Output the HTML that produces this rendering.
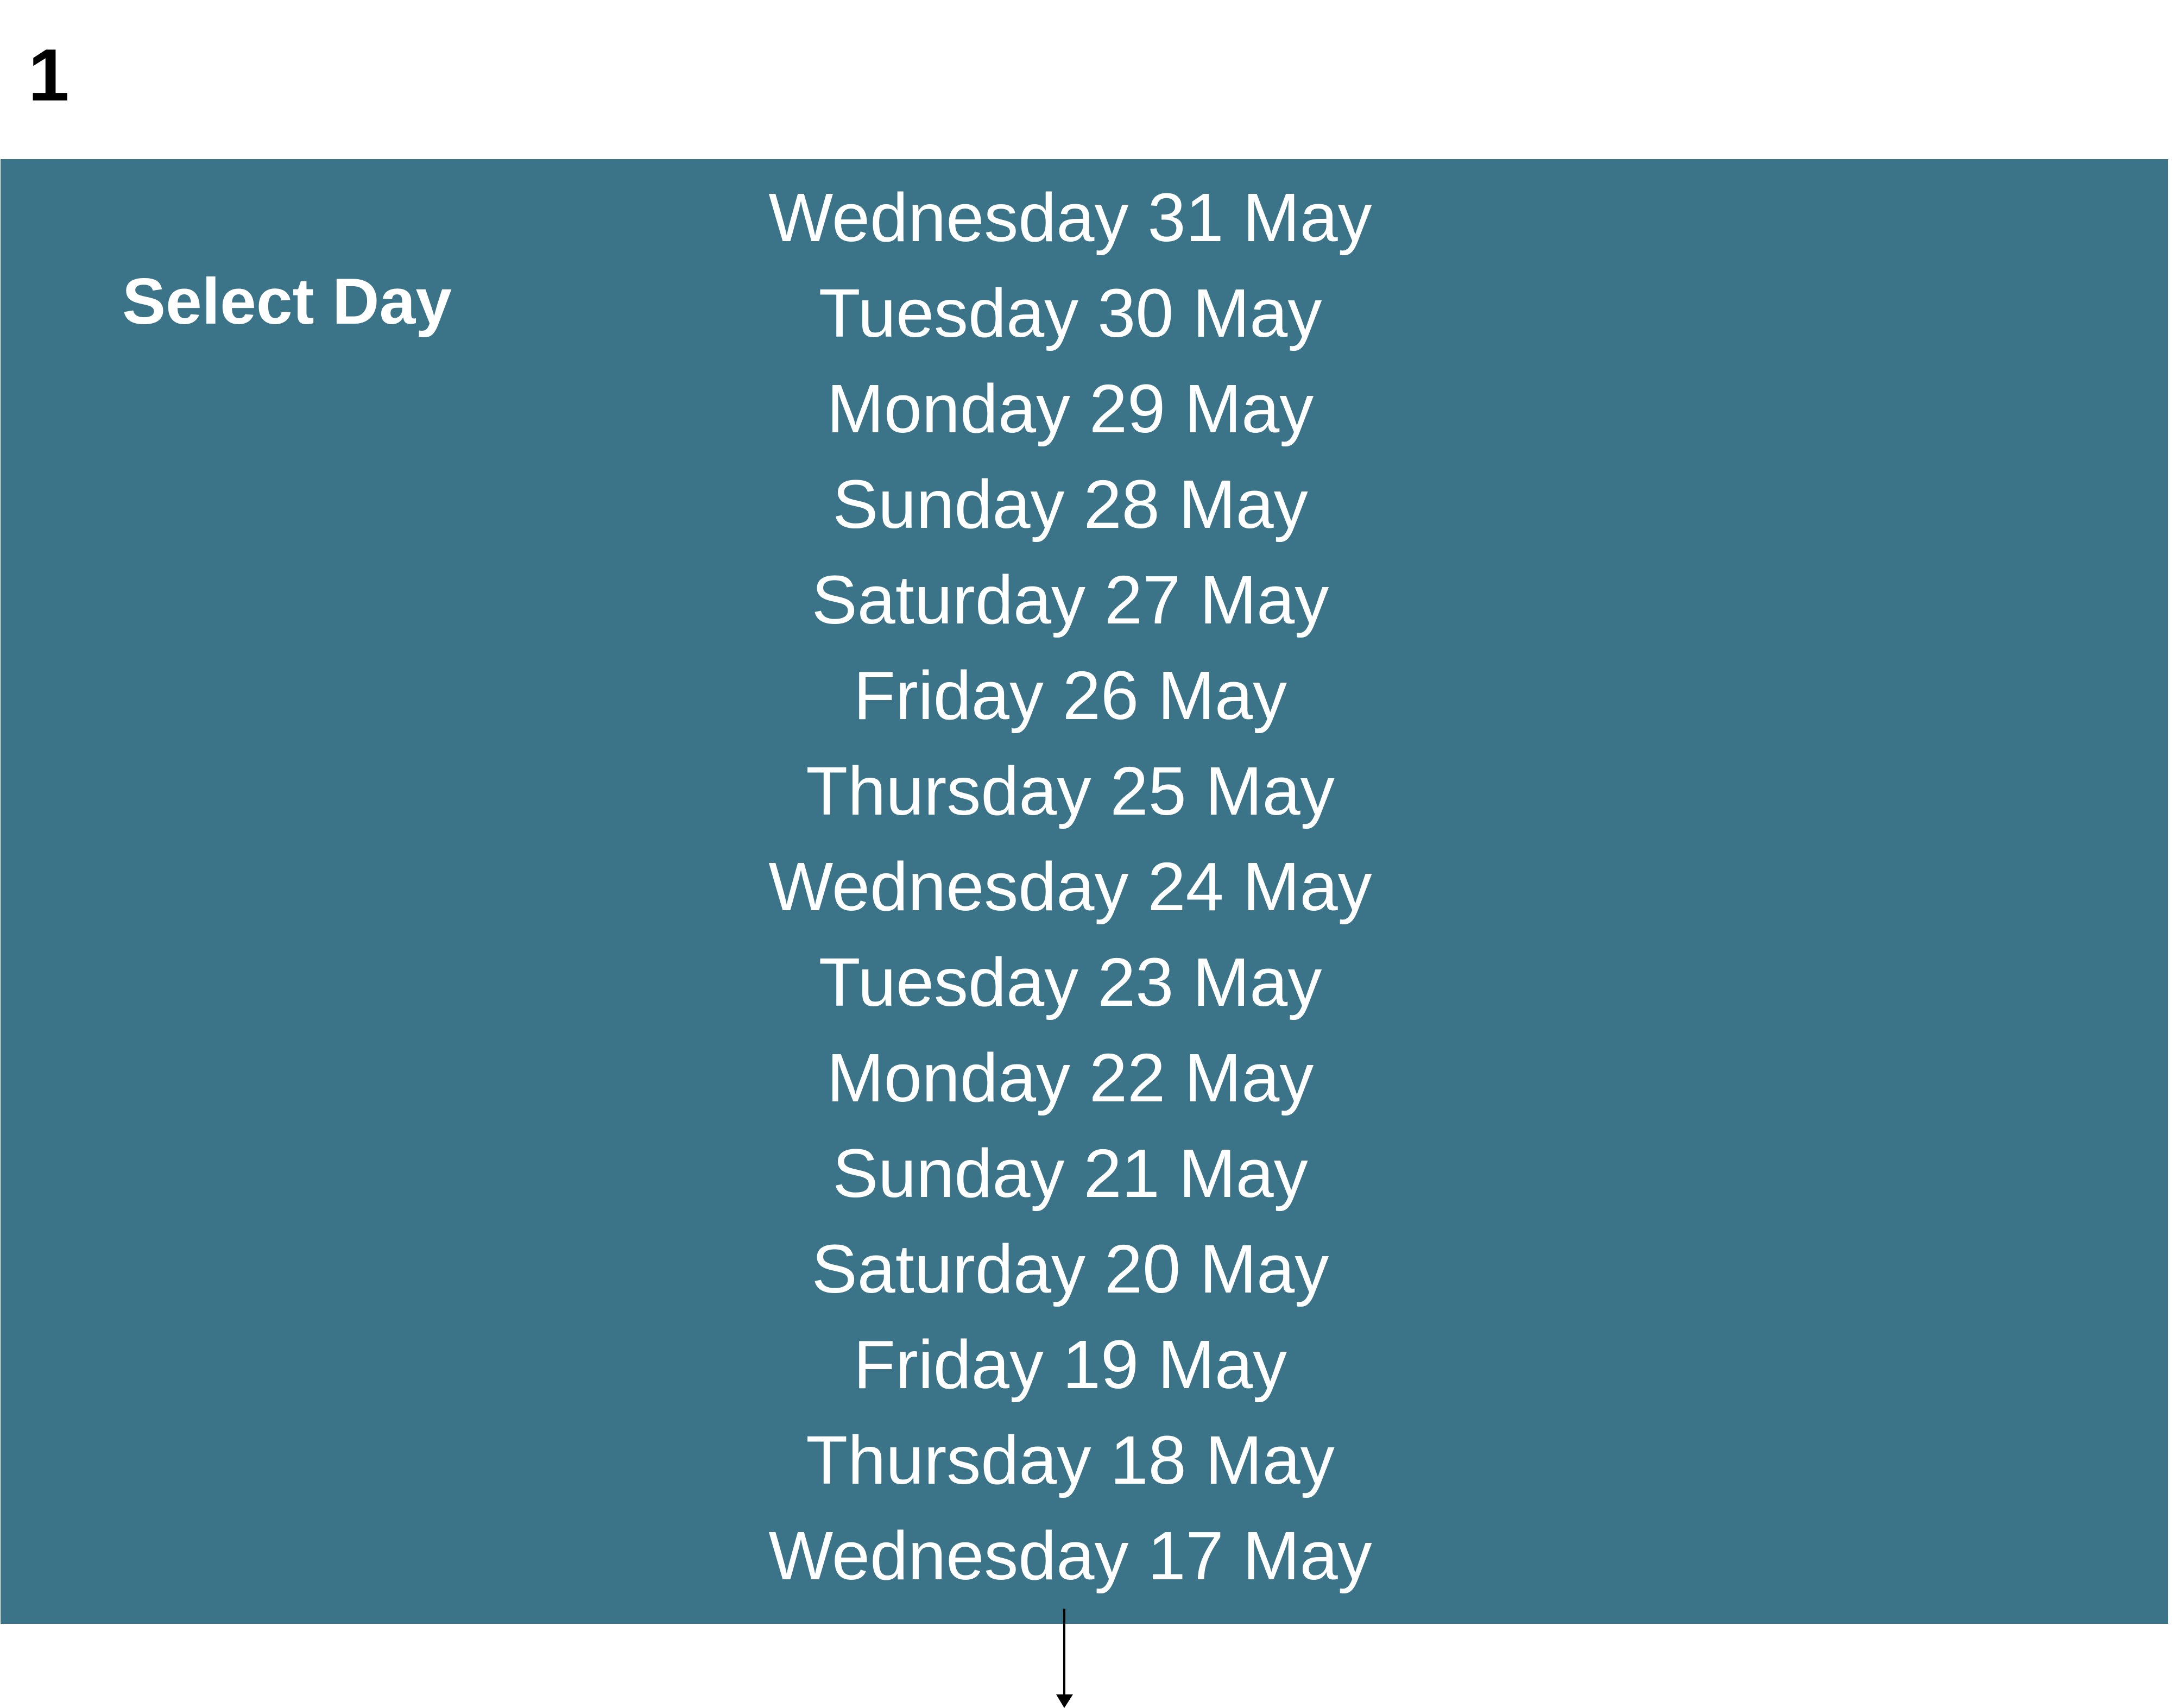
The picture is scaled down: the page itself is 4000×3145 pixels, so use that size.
<!DOCTYPE html>
<html><head><meta charset="utf-8"><style>
html,body{margin:0;padding:0;background:#fff;}
body{width:4000px;height:3145px;position:relative;overflow:hidden;font-family:"Liberation Sans",Arial,sans-serif;}
.num{position:absolute;left:52px;top:58px;font-size:136px;font-weight:bold;line-height:160px;color:#000;}
.panel{position:absolute;left:1px;top:293px;width:3992px;height:2697px;background:#3b7389;}
.sel{position:absolute;left:224px;top:0;font-size:120px;font-weight:bold;color:#fff;white-space:nowrap;}
.d{position:absolute;left:0;width:3940px;text-align:center;font-size:126px;color:#fff;white-space:nowrap;line-height:1;}
</style></head><body>
<div class="num">1</div>
<div class="panel">
<div class="sel" style="top:193px;">Select Day</div>
<div class="d" style="top:45px">Wednesday 31 May</div>
<div class="d" style="top:221px">Tuesday 30 May</div>
<div class="d" style="top:397px">Monday 29 May</div>
<div class="d" style="top:573px">Sunday 28 May</div>
<div class="d" style="top:749px">Saturday 27 May</div>
<div class="d" style="top:925px">Friday 26 May</div>
<div class="d" style="top:1101px">Thursday 25 May</div>
<div class="d" style="top:1277px">Wednesday 24 May</div>
<div class="d" style="top:1453px">Tuesday 23 May</div>
<div class="d" style="top:1629px">Monday 22 May</div>
<div class="d" style="top:1805px">Sunday 21 May</div>
<div class="d" style="top:1981px">Saturday 20 May</div>
<div class="d" style="top:2157px">Friday 19 May</div>
<div class="d" style="top:2333px">Thursday 18 May</div>
<div class="d" style="top:2509px">Wednesday 17 May</div>
</div>
<svg style="position:absolute;left:0;top:0" width="4000" height="3145">
<line x1="1960" y1="2962" x2="1960" y2="3122" stroke="#000" stroke-width="4"/>
<polygon points="1945,3120 1976,3120 1960,3145" fill="#000"/>
</svg>
</body></html>
